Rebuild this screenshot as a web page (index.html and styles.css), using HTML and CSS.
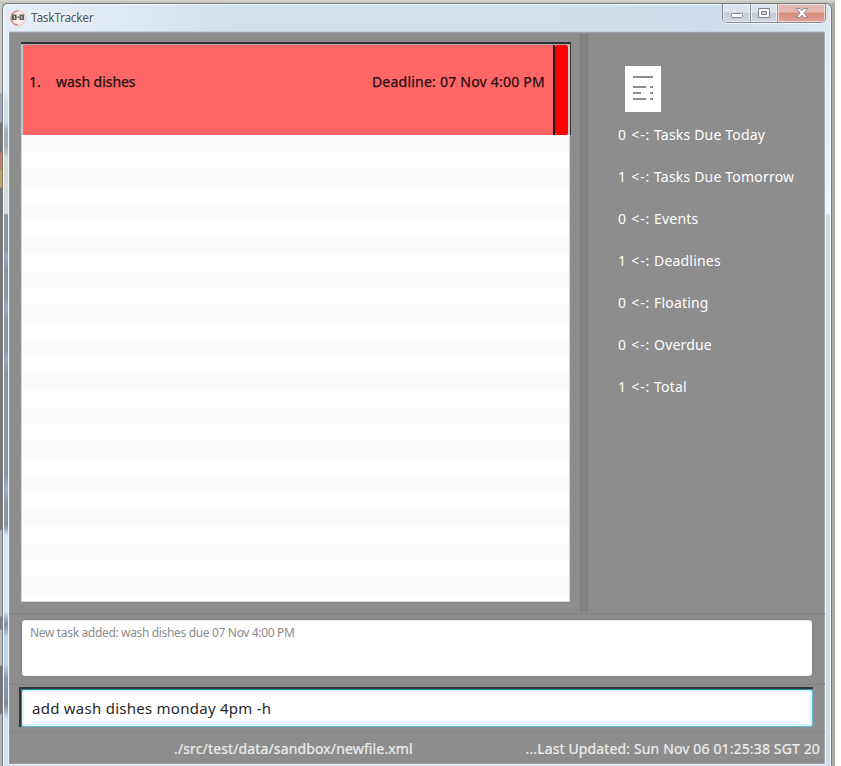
FILE: index.html
```
<!DOCTYPE html>
<html lang="en">
<head>
<meta charset="utf-8">
<title>TaskTracker</title>
<link rel="stylesheet" href="styles.css">
</head>
<body>
<div class="desktop">
  <div class="backdrop"></div>
  <div class="window">
    <header class="titlebar">
      <svg class="logo" width="16" height="16" viewBox="0 0 16 16">
        <circle cx="8" cy="8" r="7.500" fill="#fcebe4" stroke="#e6b3b0" stroke-width=".8"/>
        <path d="M8 1A7 7 0 0 0 8 15" fill="none" stroke="#dc8e8e" stroke-width="1.600"/>
        <path d="M2 4.500h4.500v5.500H2zM9.500 4.500h4.500v5.500H9.500z" fill="#5f5c5c"/>
        <path d="M4 6h1v3H4zM11.300 6h1v3h-1z" fill="#ccc"/>
        <path d="M6.500 6.500h3v1.500h-3z" fill="#777"/>
      </svg>
      <span class="caption">TaskTracker</span>
      <div class="controls">
        <span class="control min"><svg width="14" height="12" viewBox="0 0 14 12"><rect x="1.500" y="6.500" width="11" height="4" rx="1" fill="#fff" stroke="#85858f"/></svg></span>
        <span class="control max"><svg width="12" height="12" viewBox="0 0 12 12"><path d="M.5 1.500h11v9H.5zM3.500 4.500h5v3h-5z" fill="#f8f8f8" fill-rule="evenodd" stroke="#85858f"/></svg></span>
        <span class="control close"><svg width="12" height="10" viewBox="0 0 12 10"><path d="M.5.5h3.500L6 2.700 8 .5h3.500L8 5l3.500 4.500H8L6 7.300 4 9.500H.5L4 5z" fill="#fff" stroke="#85858f" stroke-width=".9"/></svg></span>
      </div>
    </header>
    <main class="client">
      <section class="main">
        <div class="list">
          <article class="task">
            <div class="details">
              <span class="number">1.</span>
              <span class="name">wash dishes</span>
              <span class="deadline">Deadline: 07 Nov 4:00 PM</span>
            </div>
            <div class="priority"></div>
          </article>
          <div class="rows"></div>
        </div>
        <div class="divider"></div>
        <aside class="stats">
          <svg class="report" width="36" height="46" viewBox="0 0 36 46">
            <path fill="#fff" d="M0 0h36v46H0z"/>
            <path fill="#8d8d8d" d="M8 10h20v2H8zM8 20h13v2H8zM25 20h3v2h-3zM8 26h8v2H8zM25 26h3v2h-3zM8 32h13v2H8zM25 32h3v2h-3z"/>
          </svg>
          <p class="stat">0 <span class="arrow">&lt;-:</span> Tasks Due Today</p>
          <p class="stat">1 <span class="arrow">&lt;-:</span> Tasks Due Tomorrow</p>
          <p class="stat">0 <span class="arrow">&lt;-:</span> Events</p>
          <p class="stat">1 <span class="arrow">&lt;-:</span> Deadlines</p>
          <p class="stat">0 <span class="arrow">&lt;-:</span> Floating</p>
          <p class="stat">0 <span class="arrow">&lt;-:</span> Overdue</p>
          <p class="stat">1 <span class="arrow">&lt;-:</span> Total</p>
        </aside>
      </section>
      <section class="result"><div class="message"><span>New task added: wash dishes due 07 Nov 4:00 PM</span></div></section>
      <section class="command"><div class="field"><span>add wash dishes monday 4pm -h</span></div></section>
      <footer class="status"><span class="path">./src/test/data/sandbox/newfile.xml</span><span class="updated">...Last Updated: Sun Nov 06 01:25:38 SGT 20</span></footer>
    </main>
  </div>
  <div class="shadow"></div>
</div>
</body>
</html>
```

FILE: styles.css
```
* { box-sizing: border-box; }
body { margin: 0; background: #fff; font-family: "Noto Sans", "Open Sans", sans-serif; overflow: hidden; }
.desktop { display: grid; grid-template-columns: 2px 830px 3px; width: 835px; height: 766px; padding-top: 3px; background: linear-gradient(#d8d8d0, #c0c0b8 3px, #b5b5ae 4px); }
.backdrop { background: linear-gradient(#cbcac2 90px, #9eabbd 91px 119px, #777 120px 149px, #c77b6b 150px 166px, #c5a45e 167px 184px, #777 185px 526px, #b4b4b4 528px 613px, #818181 614px 626px, #bbb 627px 662px, #777 663px 710px, #b4b4b4 712px); }
.shadow { background: #adada6; }
.window { display: flex; flex-direction: column; height: 763px; border: 1px solid #777b80; border-bottom: 0; border-radius: 6px 6px 0 0; padding: 0 5px 1px; box-shadow: inset 1px 1px #f6faff, inset -1px 0 #f3f9ff;
  background: linear-gradient(#e5edf4 85px, #ccdef0 100px 118px, #a8b0b7 126px 143px, #ddd8c9 154px 180px, #dadde0 188px 209px, #8a939c 211px 245px, #98a6b8 252px, #8a939c 265px 290px, #98a6b8 304px, #8a939c 318px 345px, #98a6b8 354px, #8a939c 370px 470px, #9fafc5 486px, #8a939c 500px 522px, #d5e8fc 532px 607px, #818d9a 620px, #bcd5ea 633px 660px, #8998a6 674px 688px, #7d8893 700px, #cfe2f3 715px) left / 7px 100% no-repeat,
  linear-gradient(#dce7f0, #e7f0f8 170px, #edf5fb 209px, #cbdceb 211px) right / 7px 100% no-repeat, #cfe1ef; }
.titlebar { display: flex; height: 26px; flex: none; margin: 1px -4px 0; padding-left: 6px; border-radius: 5px 5px 0 0; background: linear-gradient(100deg, #e5edf4, #dfe9f1 15%, #cfe0ee 30%, #d1e1ee 60%, #cbddec 85%, #dce8f2); }
.logo { flex: none; margin: 5px 5px 0 0; }
.caption { color: #555; font-size: 12px; line-height: 16px; margin-top: 5px; letter-spacing: -.33px; text-shadow: 0 0 7px #fff, 0 0 7px #fff; }
.controls { display: flex; height: 19px; width: 104px; margin: -1px 4px 0 auto; border: 1px solid #858b94; border-top: 0; border-radius: 0 0 5px 5px; overflow: hidden; box-shadow: 0 1px #f4f9fd; }
.control { display: flex; align-items: center; justify-content: center; border-right: 1px solid #91979f; box-shadow: inset 0 0 0 1px #ffffff88; background: linear-gradient(#dce4ec 45%, #c3cdd7 50%, #d0dae4); }
.min { width: 28px; }
.max { width: 27px; }
.close { flex: 1; border: 0; background: linear-gradient(#e4b8b3 45%, #d98a7c 50%, #e0a398); }
.client { display: grid; grid-template-rows: 581px 70px 49px 32px; width: 818px; height: 734px; border: 1px solid #edf6fc; border-top-color: #c4d3df; box-shadow: inset 0 1px #949ea8, inset 1px 0 #999, inset -1px 0 #aaa, inset 0 -1px #999; background: #8d8d8d; }
.main { display: grid; grid-template-columns: 550px 8px 1fr; padding-left: 12px; column-gap: 9px; }
.list { margin-top: 10px; height: 560px; width: 550px; }
.task { display: grid; grid-template-columns: 532px 13px; height: 93px; border-top: 2px solid #333; border-right: 1px solid #383838; background: #c8c8c8; padding: 1px 2px 0 2px; box-shadow: inset 0 1px #aaa; }
.details { display: flex; align-items: start; background: #f66; border-right: 2px solid #1d1515; padding: 27px 8px 0 6px; color: #24100f; font-size: 14px; line-height: 20px; -webkit-text-stroke: .25px; }
.number { width: 27px; }
.name { letter-spacing: -.05px; }
.deadline { margin-left: auto; letter-spacing: .23px; }
.priority { background: #f00; border-radius: 2px; }
.rows { height: 467px; width: 549px; border: solid #d8d8d8; border-width: 0 1px 1px; background: repeating-linear-gradient(#fbfbfb 0 17px, #fff 17px 34px); }
.divider { width: 8px; height: 578px; background: #848484; border: solid #7d7d7d; border-width: 0 1px; margin-top: 2px; }
.stats { padding: 34px 0 0 21px; color: #fff; }
.report { display: block; margin: 0 0 13px 7px; }
.stat { margin: 0 0 22px; font-size: 14px; line-height: 20px; letter-spacing: .19px; white-space: nowrap; }
.arrow { margin-left: 1.2px; letter-spacing: .9px; }
.result { border-top: 2px solid #878787; padding: 4px 0 0 12px; }
.message { height: 58px; width: 792px; border: 1px solid #858585; border-radius: 4px; background: linear-gradient(#f3f3f3, #fff 3px); padding: 4px 8px; color: #8c8c8c; font-size: 12px; line-height: 18px; letter-spacing: -.34px; }
.command { border-top: 2px solid #878787; padding: 2px 0 0 10px; }
.field { width: 794px; height: 40px; border: solid #333; border-width: 2px 0 0 2px; }
.field span { display: block; height: 38px; width: 792px; border: 1px solid #62bedf; border-top-color: #168db6; border-left-color: #168db6; border-radius: 3px; background: #fff; box-shadow: inset 0 0 0 2px #e0f4fc; color: #292929; font-size: 15px; line-height: 37px; letter-spacing: .26px; padding-left: 10px; }
.status { display: flex; border-top: 1px solid #858585; padding: 6px 5px 0 165px; color: #eee; font-size: 14px; line-height: 20px; letter-spacing: .14px; white-space: nowrap; -webkit-text-stroke: .2px; }
.updated { margin-left: auto; }
```
